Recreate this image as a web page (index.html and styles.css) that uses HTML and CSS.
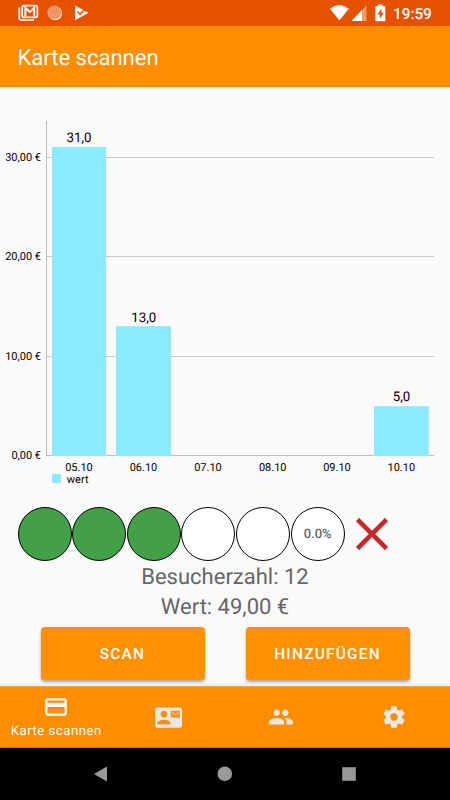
FILE: index.html
```html
<!DOCTYPE html>
<html lang="de">
<head>
    <meta charset="UTF-8">
    <meta name="viewport" content="width=device-width, initial-scale=1.0">
    <title>Karte scannen</title>
    <link rel="stylesheet" href="styles.css">
</head>
<body>

<div class="status-bar">
    <svg class="status-icons" width="80" height="26" viewBox="0 0 80 26">
        <!-- mail -->
        <path d="M2.300 7.500v11q0 1.500 1.500 1.500H17" fill="none" stroke="#fff" stroke-width="1.700"/>
        <rect x="5.200" y="5.600" width="15.200" height="11.800" rx="1.500" fill="none" stroke="#fff" stroke-width="1.700"/>
        <path d="M8.400 16.500V8l4.400 4 4.400-4V16.500" fill="none" stroke="#fff" stroke-width="1.900"/>
        <!-- sync -->
        <circle cx="38" cy="13.300" r="7" fill="#fff3d8"/>
        <circle cx="37.200" cy="12.600" r="7" fill="#ee9465"/>
        <circle cx="37.200" cy="12.600" r="5.800" fill="none" stroke="#f3ac86" stroke-width="1" stroke-dasharray="1 1"/>
        <!-- play -->
        <path d="M58 5.500L71.500 12.800 58 20.300z" fill="#fff"/>
        <path d="M60.300 11.500l2.700 2.700 7.500-7.200" fill="none" stroke="#e65100" stroke-width="1.600"/>
    </svg>
    <svg class="status-icons" width="60" height="26" viewBox="0 0 60 26">
        <path d="M1 8.700Q10.400 1.400 19.800 8.700L10.400 20.600z" fill="#fff"/>
        <path d="M37.500 5.500V21H22.500z" fill="#f19b6c"/>
        <path d="M33 10V21H22.500z" fill="#fff"/>
        <path d="M49 4.500h4.500v1.500h1.800q1 0 1 1v13.200q0 1-1 1h-8q-1 0-1-1V7q0-1 1-1H49z" fill="#fff"/>
        <path d="M52.400 8.500l-4 6h2.400v4.200l4-6h-2.400z" fill="#e65100"/>
    </svg>
    <span class="clock">19:59</span>
</div>

<header>
    <h1>Karte scannen</h1>
</header>

<main>
    <svg class="chart" width="450" height="408" viewBox="0 87 450 408">
        <g class="grid">
            <path d="M46.500 157.500H434M46.500 256.500H434M46.500 356.500H434"/>
            <path class="axis" d="M46.500 121V456M46.500 455.500H434"/>
        </g>
        <g class="bars">
            <rect x="52" y="147" width="54" height="309"/>
            <rect x="116" y="326.200" width="55" height="129.800"/>
            <rect x="374" y="406.200" width="54.800" height="49.800"/>
            <rect x="52" y="474" width="9" height="9"/>
        </g>
        <g class="y-labels">
            <text x="41" y="160.500">30,00 €</text>
            <text x="41" y="260">20,00 €</text>
            <text x="41" y="359.700">10,00 €</text>
            <text x="41" y="459.200">0,00 €</text>
        </g>
        <g class="values">
            <text x="79" y="142.400">31,0</text>
            <text x="143.800" y="321.700">13,0</text>
            <text x="401.500" y="401.400">5,0</text>
        </g>
        <g class="x-labels">
            <text x="79" y="470.500">05.10</text>
            <text x="143.500" y="470.500">06.10</text>
            <text x="208" y="470.500">07.10</text>
            <text x="272.700" y="470.500">08.10</text>
            <text x="337" y="470.500">09.10</text>
            <text x="401.300" y="470.500">10.10</text>
            <text x="77.700" y="482.500">wert</text>
        </g>
    </svg>

    <div class="stamps">
        <div class="stamp full"></div>
        <div class="stamp full"></div>
        <div class="stamp full"></div>
        <div class="stamp"></div>
        <div class="stamp"></div>
        <div class="stamp">0.0%</div>
        <svg class="cross" width="32" height="32" viewBox="0 0 32 32">
            <path d="M1.500 1.500l29 29M30.500 1.500l-29 29"/>
        </svg>
    </div>

    <div class="info">
        <p>Besucherzahl: 12</p>
        <p>Wert: 49,00 €</p>
    </div>

    <div class="buttons">
        <button>SCAN</button>
        <button>HINZUFÜGEN</button>
    </div>
</main>

<nav class="bottom-nav">
    <a class="active">
        <svg width="26" height="26" viewBox="0 0 24 24"><path d="M20 4H4c-1.110 0-1.990.890-1.990 2L2 18c0 1.110.890 2 2 2h16c1.110 0 2-.890 2-2V6c0-1.110-.890-2-2-2zm0 14H4v-6h16v6zm0-10H4V6h16v2z"/></svg>
        <span>Karte scannen</span>
    </a>
    <a>
        <svg width="27" height="27" viewBox="0 0 24 24"><path d="M21 8V7l-3 2-3-2v1l3 2 3-2zm1-5H2C.9 3 0 3.900 0 5v14c0 1.100.9 2 2 2h20c1.100 0 1.990-.9 1.990-2L24 5c0-1.100-.9-2-2-2zM8 6c1.660 0 3 1.340 3 3s-1.340 3-3 3-3-1.340-3-3 1.340-3 3-3zm6 12H2v-1c0-2 4-3.100 6-3.100s6 1.100 6 3.100v1zm8-6h-8V6h8v6z"/></svg>
    </a>
    <a>
        <svg width="26" height="26" viewBox="0 0 24 24"><path d="M16 11c1.660 0 2.990-1.340 2.990-3S17.660 5 16 5c-1.660 0-3 1.340-3 3s1.340 3 3 3zm-8 0c1.660 0 2.990-1.340 2.990-3S9.660 5 8 5C6.340 5 5 6.340 5 8s1.340 3 3 3zm0 2c-2.330 0-7 1.170-7 3.500V19h14v-2.500c0-2.330-4.670-3.500-7-3.500zm8 0c-.290 0-.620.020-.970.050 1.160.840 1.970 1.970 1.970 3.450V19h6v-2.500c0-2.330-4.670-3.500-7-3.500z"/></svg>
    </a>
    <a>
        <svg width="26" height="26" viewBox="0 0 24 24"><path d="M19.430 12.980c.040-.320.070-.640.070-.980s-.030-.660-.070-.980l2.110-1.650c.190-.150.240-.420.120-.640l-2-3.460c-.120-.220-.390-.300-.610-.220l-2.490 1c-.520-.400-1.080-.730-1.690-.980l-.380-2.650C14.460 2.180 14.250 2 14 2h-4c-.250 0-.460.180-.490.420l-.380 2.650c-.610.250-1.170.590-1.690.980l-2.490-1c-.230-.090-.490 0-.610.220l-2 3.460c-.130.220-.070.490.120.640l2.110 1.650c-.040.320-.070.650-.070.980s.030.660.070.980l-2.110 1.650c-.190.150-.240.420-.120.640l2 3.460c.120.220.390.300.610.220l2.490-1c.520.400 1.080.730 1.690.980l.380 2.650c.030.240.240.420.490.420h4c.250 0 .460-.180.490-.420l.380-2.650c.610-.250 1.170-.590 1.690-.980l2.490 1c.230.090.490 0 .610-.220l2-3.460c.120-.220.070-.490-.120-.640l-2.110-1.650zM12 15.500c-1.930 0-3.500-1.570-3.500-3.500s1.570-3.500 3.500-3.500 3.500 1.570 3.500 3.500-1.570 3.500-3.500 3.500z"/></svg>
    </a>
</nav>

<div class="system-nav">
    <svg width="16" height="16" viewBox="0 0 16 16"><path d="M1 8L14 .6V15.400z"/></svg>
    <svg width="16" height="16" viewBox="0 0 16 16"><circle cx="7.800" cy="7.800" r="7.300"/></svg>
    <svg width="16" height="16" viewBox="0 0 16 16"><rect x="1.200" y="1.200" width="13.600" height="13.600"/></svg>
</div>

</body>
</html>
```
FILE: styles.css
```css
* {
    box-sizing: border-box;
}
body {
    font-family: Roboto, sans-serif;
    text-rendering: geometricPrecision;
    background-color: #fafafa;
    margin: 0;
    width: 450px;
    height: 800px;
    display: flex;
    flex-direction: column;
    overflow: hidden;
}
.status-bar {
    background-color: #e65100;
    color: #fff;
    height: 26px;
    display: flex;
    align-items: center;
    padding: 0 17px;
}
.status-icons:first-child {
    margin-right: auto;
}
.clock {
    font-size: 15.3px;
    font-weight: 500;
    width: 40px;
    margin-left: 5px;
    padding-top: 1px;
}
.status-icons + .status-icons {
    margin-right: -1px;
}
header {
    background-color: #fe8d00;
    color: #fff;
    height: 61px;
    padding: 0 17.5px;
    display: flex;
    align-items: center;
}
header h1 {
    margin: 0;
    padding-top: 3px;
    font-size: 22px;
    font-weight: 400;
}
main {
    flex: 1;
}
.chart {
    display: block;
}
.grid path {
    stroke: #c8c8c8;
    stroke-width: 1;
    fill: none;
}
.grid .axis {
    stroke: #bebebe;
}
.bars {
    fill: #8ceaff;
}
.chart text {
    font-size: 11px;
    text-anchor: middle;
}
.chart .y-labels text {
    text-anchor: end;
}
.chart .values text {
    font-size: 13.3px;
}
.stamps {
    display: flex;
    align-items: center;
    padding: 12px 17.5px 0;
}
.stamp {
    width: 54px;
    height: 54px;
    margin-right: 0.65px;
    border: 1.2px solid #000;
    border-radius: 50%;
    background-color: #fff;
    color: #666;
    font-size: 13px;
    font-weight: 500;
    display: flex;
    align-items: center;
    justify-content: center;
}
.stamp.full {
    background-color: #43a047;
}
.cross {
    margin-left: 11px;
}
.cross path {
    stroke: #c62828;
    stroke-width: 4.5;
}
.info {
    color: #666;
    font-size: 22px;
    line-height: 29.5px;
    text-align: center;
    padding-top: 2px;
}
.info p {
    margin: 0;
}
.buttons {
    display: flex;
    justify-content: center;
    gap: 41px;
    padding-top: 5px;
}
.buttons button {
    width: 164px;
    height: 53px;
    border: none;
    border-radius: 4px;
    background-color: #ff9000;
    color: #fff;
    font-family: inherit;
    font-size: 15.3px;
    font-weight: 500;
    letter-spacing: 1.3px;
    box-shadow: 0 2px 3px rgba(0, 0, 0, 0.35);
}
.bottom-nav {
    height: 62px;
    background-color: #fe8d00;
    border-top: 1px solid #f3a54d;
    border-bottom: 1px solid #c87000;
    display: flex;
    box-shadow: 0 -2px 3px rgba(0, 0, 0, 0.06);
}
.bottom-nav a {
    flex: 1;
    display: flex;
    flex-direction: column;
    align-items: center;
    justify-content: center;
    fill: #e8e8e8;
}
.bottom-nav .active {
    fill: #fff;
    color: #fff;
    font-size: 13.2px;
    letter-spacing: 0.5px;
}
.bottom-nav .active span {
    line-height: 16px;
    padding-top: 4px;
}
.system-nav {
    height: 52px;
    background-color: #000;
    display: flex;
    justify-content: center;
    align-items: center;
    gap: 108px;
    fill: #999;
}
```
